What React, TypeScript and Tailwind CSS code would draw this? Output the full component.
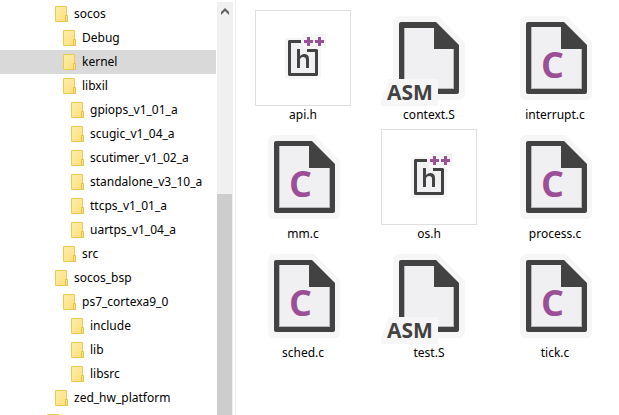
import React from "react";

type FolderRow = { name: string; depth: number; selected?: boolean };
type FileKind = "c" | "h" | "asm";

const folders: FolderRow[] = [
  { name: "socos", depth: 1 },
  { name: "Debug", depth: 2 },
  { name: "kernel", depth: 2, selected: true },
  { name: "libxil", depth: 2 },
  { name: "gpiops_v1_01_a", depth: 3 },
  { name: "scugic_v1_04_a", depth: 3 },
  { name: "scutimer_v1_02_a", depth: 3 },
  { name: "standalone_v3_10_a", depth: 3 },
  { name: "ttcps_v1_01_a", depth: 3 },
  { name: "uartps_v1_04_a", depth: 3 },
  { name: "src", depth: 2 },
  { name: "socos_bsp", depth: 1 },
  { name: "ps7_cortexa9_0", depth: 2 },
  { name: "include", depth: 3 },
  { name: "lib", depth: 3 },
  { name: "libsrc", depth: 3 },
  { name: "zed_hw_platform", depth: 1 },
  { name: "", depth: 0 },
];

const files: { name: string; kind: FileKind }[] = [
  { name: "api.h", kind: "h" },
  { name: "context.S", kind: "asm" },
  { name: "interrupt.c", kind: "c" },
  { name: "mm.c", kind: "c" },
  { name: "os.h", kind: "h" },
  { name: "process.c", kind: "c" },
  { name: "sched.c", kind: "c" },
  { name: "test.S", kind: "asm" },
  { name: "tick.c", kind: "c" },
];

const indent = ["pl-[47px]", "pl-[55px]", "pl-[63px]", "pl-[71px]"];

function FolderIcon() {
  return (
    <svg className="h-4 w-[13px] shrink-0" viewBox="0 0 13 16" aria-hidden="true">
      <defs>
        <linearGradient id="folder" x1="0" y1="0" x2="1" y2="1">
          <stop offset="0" stopColor="#ffedaa" />
          <stop offset="1" stopColor="#fddf7c" />
        </linearGradient>
      </defs>
      <path d="M.5.5h11v15H.5z" fill="url(#folder)" stroke="#ecc94f" />
      <path d="M10.5 9.5h2v6h-2z" fill="#ffe692" stroke="#e6c045" />
    </svg>
  );
}

function CIcon() {
  return (
    <svg className="size-24" viewBox="0 0 96 96" aria-hidden="true">
      <path d="M20 6H59L85 32V84Q85 90 79 90H20Q13 90 13 84V13Q13 6 20 6Z" fill="#f6f6f6" />
      <path d="M21 12H57L80 35V82Q80 84 78 84H21Q19 84 19 82V14Q19 12 21 12Z" fill="#424242" />
      <path d="M24 17H54V39H75V79H24Z" fill="#b9b9bb" />
      <path d="M25 17H54V39H74V78H25Z" fill="#f0eff1" />
      <text x="34" y="68" fill="#9b4f96" className="font-['Open_Sans'] text-[36px] font-bold">C</text>
    </svg>
  );
}

function AsmIcon() {
  return (
    <svg className="size-24" viewBox="0 0 96 96" aria-hidden="true">
      <path d="M19 6H57L84 33V83Q84 90 77 90H12V13Q12 6 19 6Z" fill="#f6f6f6" />
      <path d="M20 12H55L78 35V82Q78 84 76 84H18V14Q18 12 20 12Z" fill="#424242" />
      <path d="M23 18H53V39H73V79H23Z" fill="#b9b9bb" />
      <path d="M24 18H53V39H72V78H24Z" fill="#f0eff1" />
      <path d="M8 69H57V96H0V91Z" fill="#f6f6f6" />
      <text x="6" y="90" fill="#424242" className="font-['Open_Sans'] text-[21px] font-bold">ASM</text>
    </svg>
  );
}

function HIcon() {
  return (
    <svg className="size-24" viewBox="0 0 96 96" aria-hidden="true">
      <rect x=".5" y=".5" width="95" height="95" fill="#fff" stroke="#dfdfdf" />
      <path d="M32 28H48V24H71V38H66V67Q66 69 64 69H32Q30 69 30 67V30Q30 28 32 28Z" fill="#f6f6f6" />
      <path d="M36 33H48V39H60V63H36Z" fill="#f0eff1" />
      <path d="M34 30H46V33H36V63H60V42H52V39H62L63 40V65L62 66H34L33 65V31Z" fill="#424242" />
      <path d="M42 39H45V46Q47 44 49 44Q54 44 54 49V58H51V50Q51 47 48 47Q46 47 45 49V58H42Z" fill="#424242" />
      <path d="M52 27H55V30H58V33H55V36H52V33H49V30H52ZM63 27H66V30H69V33H66V36H63V33H60V30H63Z" fill="#9b4f96" />
    </svg>
  );
}

const icons: Record<FileKind, () => React.JSX.Element> = { c: CIcon, h: HIcon, asm: AsmIcon };

export default function App() {
  return (
    <div className="flex h-screen overflow-hidden bg-white font-['Noto_Sans','Noto_Sans_CJK_SC',sans-serif] text-[12px] leading-4 text-black">
      <aside className="flex shrink-0 gap-px border-r border-[#f0f0f0] pt-0.5 pr-0.5">
        <nav aria-label="Folders" className="w-[216px]">
          <ul>
            {folders.map((f, i) => (
              <li key={i}>
                <button
                  type="button"
                  aria-label={f.name || "Folder"}
                  aria-current={f.selected ? "true" : undefined}
                  className={`flex h-6 w-full items-center gap-1.5 whitespace-nowrap ${indent[f.depth]} ${f.selected ? "bg-[#d9d9d9]" : ""}`}
                >
                  <FolderIcon />
                  <span>{f.name}</span>
                </button>
              </li>
            ))}
          </ul>
        </nav>
        <div className="flex w-4 flex-col bg-[#f0f0f0]">
          <button type="button" aria-label="Scroll up" className="flex h-[18px] w-full items-center justify-center">
            <svg className="h-[7px] w-2" viewBox="0 0 8 7" aria-hidden="true">
              <path d="M4 0L8 4V7L4 3L0 7V4Z" fill="#606060" />
            </svg>
          </button>
          <div className="grow-[174]" />
          <div className="mr-px grow-[221] bg-[#cdcdcd]" />
        </div>
      </aside>
      <main className="min-w-0 flex-1 pt-2.5 pl-1">
        <ul className="grid grid-cols-[repeat(auto-fill,126px)] gap-y-[5px]">
          {files.map((f) => {
            const Icon = icons[f.kind];
            return (
              <li key={f.name}>
                <button type="button" className="flex w-full flex-col items-center leading-[18px]">
                  <Icon />
                  <span>{f.name}</span>
                </button>
              </li>
            );
          })}
        </ul>
      </main>
    </div>
  );
}
